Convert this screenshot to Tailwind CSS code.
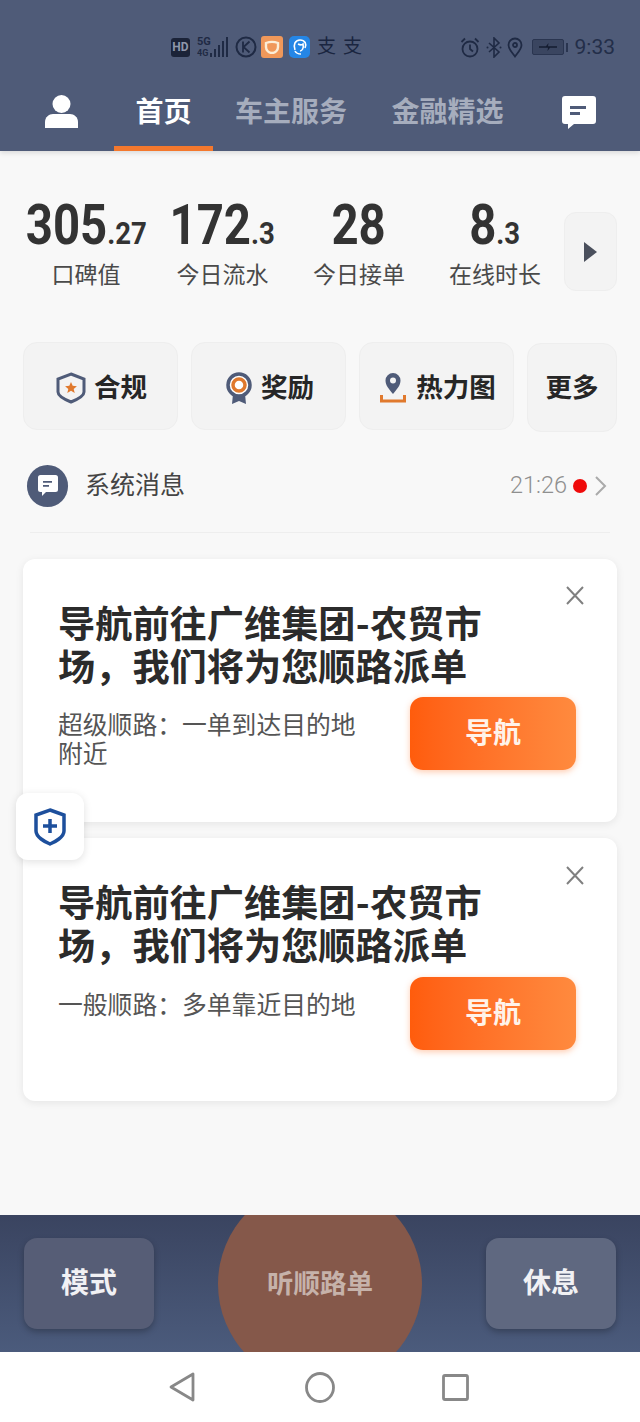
<!DOCTYPE html>
<html lang="zh"><head><meta charset="utf-8"><script src="https://cdn.jsdelivr.net/npm/@tailwindcss/browser@4"></script></head>
<body class="m-0">
<div class="relative w-[640px] h-[1422px] overflow-hidden flex flex-col bg-[#f8f8f8] font-['Roboto','Noto_Sans_CJK_SC',sans-serif] text-[#333]">

<header class="h-[151px] shrink-0 bg-[#4f5b78] flex flex-col relative z-10 shadow-[0_2px_5px_rgba(0,0,0,0.12)]">
  <div class="h-[35px]"></div>
  <div class="h-[24px] flex items-center pl-[171px] pr-[25px] text-[#1f2a44]">
    <span class="w-[19px] h-[19px] rounded-[3px] bg-[#1b2338] text-[#8f97ab] text-[12px] font-bold leading-[19px] text-center">HD</span>
    <svg class="ml-[7px]" width="32" height="22" viewBox="0 0 32 22" fill="#1f2a44"><text x="0" y="9" font-size="11" font-weight="700" font-family="Roboto">5G</text><text x="0" y="20" font-size="9" font-weight="700" font-family="Roboto">4G</text><rect x="13" y="17" width="2" height="4"/><rect x="17" y="13" width="2" height="8"/><rect x="21" y="9" width="2" height="12"/><rect x="25" y="5" width="2" height="16"/><rect x="29" y="1" width="2" height="20"/></svg>
    <svg class="ml-[6px]" width="22" height="22" viewBox="0 0 22 22" fill="none" stroke="#1f2a44" stroke-width="2"><circle cx="11" cy="11" r="9.500"/><path d="M8 5.500v11M14.500 5.500 8.500 11l6 5.500" stroke-width="1.800"/></svg>
    <span class="ml-[4px] w-[22px] h-[22px] rounded-[3px] bg-[#f0985a] flex items-center justify-center"><svg width="16" height="14" viewBox="0 0 16 14" fill="none" stroke="#fbeed8" stroke-width="2.400"><path d="M2 3c4-1.500 8-1.500 12 0v4a6 6 0 0 1-12 0z"/></svg></span>
    <span class="ml-[6px] w-[21px] h-[22px] rounded-[5px] bg-[#2586e6] flex items-center justify-center"><svg width="16" height="18" viewBox="0 0 16 18" fill="none" stroke="#fff" stroke-width="1.600"><path d="M3 12C1 7 3 2 8 2s7 4 5 8"/><path d="M6 6c2 1 4 1 5 0 1 4-1 7-3 7"/><path d="M3 13c1 2 3 3 6 3"/></svg></span>
    <span class="ml-[7px] text-[19px] leading-[22px] w-[19px] font-normal text-center text-[#1a2540]">支</span>
    <span class="ml-[7px] text-[19px] leading-[22px] w-[19px] font-normal text-center text-[#1a2540]">支</span>
    <div class="ml-auto flex items-center">
      <svg width="20" height="21" viewBox="0 0 20 21" fill="none" stroke="#1f2a44" stroke-width="1.800"><circle cx="10" cy="12" r="7.500"/><path d="M10 7.500V12l3 2.500M1.500 5 5 1.500M18.500 5 15 1.500"/></svg>
      <svg class="ml-[6px]" width="16" height="21" viewBox="0 0 16 21" fill="none" stroke="#1f2a44" stroke-width="1.600"><path d="M3 6l10 9-5 5V1l5 5L3 15"/><circle cx="1.500" cy="10.500" r="1" fill="#1f2a44" stroke="none"/><circle cx="14.500" cy="10.500" r="1" fill="#1f2a44" stroke="none"/></svg>
      <svg class="ml-[5px]" width="16" height="21" viewBox="0 0 16 21" fill="none" stroke="#1f2a44" stroke-width="1.800"><path d="M8 19.500C5 15.500 1.500 12 1.500 8a6.500 6.500 0 0 1 13 0c0 4-3.500 7.500-6.500 11.500z"/><circle cx="8" cy="8" r="2"/></svg>
      <span class="ml-[9px] w-[32px] h-[16px] rounded-[2px] border border-[#2a3550] bg-[#3a4560] flex items-center justify-center"><svg width="18" height="8" viewBox="0 0 18 8" fill="#141c30"><path d="M0 3.300h7L9.500 0 9 3.300h9v1.400h-7L8.500 8 9 4.700H0z"/></svg></span>
      <span class="ml-[2px] w-[2px] h-[9px] bg-[#2a3550]"></span>
      <span class="ml-[7px] text-[21px] leading-[22px] text-[#232e49]">9:33</span>
    </div>
  </div>
  <nav class="flex-1 flex items-stretch text-[28px] font-bold">
    <div class="w-[114px] flex items-center justify-center pl-[9px] pt-[12px]">
      <svg width="33" height="33" viewBox="0 0 33 33" fill="#fff"><circle cx="16.500" cy="9" r="9"/><path d="M0 33v-6c0-5 4-8 8-8h17c4 0 8 3 8 8v6z"/></svg>
    </div>
    <div class="w-[99px] h-full border-b-[5px] border-[#f4782d] text-white flex items-center justify-center pt-[20px]">首页</div>
    <div class="ml-[22px] w-[112px] text-[#a6adbd] flex items-center justify-center pt-[15px]">车主服务</div>
    <div class="ml-[44px] w-[113px] text-[#a6adbd] flex items-center justify-center pt-[15px]">金融精选</div>
    <div class="ml-[58px] flex items-center pt-[14px]">
      <svg width="34" height="33" viewBox="0 0 34 33" fill="#fff"><path d="M3 0h28a3 3 0 0 1 3 3v22a3 3 0 0 1-3 3H12l-6 5v-5H3a3 3 0 0 1-3-3V3a3 3 0 0 1 3-3z"/><path d="M8 10h16v3H8zM8 16h10v3H8z" fill="#4f5b78"/></svg>
    </div>
  </nav>
</header>

<main class="flex-1 flex flex-col px-[23px] min-h-0">
  <section class="mt-[43px] h-[98px] flex -mx-[5px] relative">
    <div class="w-[136px] flex flex-col items-center">
      <div class="h-[62px] leading-[62px] font-bold text-[55px] scale-x-[0.86] whitespace-nowrap">305<span class="text-[32px]">.27</span></div>
      <div class="text-[23px] leading-[28px] text-[#4a4a4a] mt-[6px]">口碑值</div>
    </div>
    <div class="w-[137px] flex flex-col items-center">
      <div class="h-[62px] leading-[62px] font-bold text-[55px] scale-x-[0.86] whitespace-nowrap">172<span class="text-[32px]">.3</span></div>
      <div class="text-[23px] leading-[28px] text-[#4a4a4a] mt-[6px]">今日流水</div>
    </div>
    <div class="w-[136px] flex flex-col items-center">
      <div class="h-[62px] leading-[62px] font-bold text-[55px] scale-x-[0.86] whitespace-nowrap">28</div>
      <div class="text-[23px] leading-[28px] text-[#4a4a4a] mt-[6px]">今日接单</div>
    </div>
    <div class="w-[136px] flex flex-col items-center">
      <div class="h-[62px] leading-[62px] font-bold text-[55px] scale-x-[0.86] whitespace-nowrap">8<span class="text-[32px]">.3</span></div>
      <div class="text-[23px] leading-[28px] text-[#4a4a4a] mt-[6px] whitespace-nowrap">在线时长</div>
    </div>
    <div class="ml-[1px] mt-[18px] w-[53px] h-[79px] rounded-[12px] bg-[#f3f3f3] border border-[#eeeeee] flex items-center justify-center">
      <svg width="13" height="20" viewBox="0 0 13 20" fill="#4a4f5c"><path d="M0 0l13 10L0 20z"/></svg>
    </div>
  </section>

  <section class="mt-[50px] flex gap-[13px] text-[26.5px] font-bold text-[#262626]">
    <div class="w-[155px] h-[88px] rounded-[14px] bg-[#f3f3f3] border border-[#eeeeee] flex items-center justify-center gap-[8px] pl-[2px] pt-[3px]">
      <svg width="30" height="32" viewBox="0 0 30 32"><path d="M15 2l13 5v13c0 4-8 8-13 10C10 28 2 24 2 20V7z" fill="none" stroke="#4f5b78" stroke-width="3"/><path d="M15 10l1.700 3.800 4.200.4-3.200 2.700 1 4.100-3.700-2.200-3.700 2.200 1-4.100-3.200-2.700 4.200-.4z" fill="#e0792d"/></svg>
      <span>合规</span>
    </div>
    <div class="w-[155px] h-[88px] rounded-[14px] bg-[#f3f3f3] border border-[#eeeeee] flex items-center justify-center gap-[9px] pl-[3px] pt-[3px]">
      <svg width="26" height="32" viewBox="0 0 26 32"><path d="M7 22l-1 10 7-3 7 3-1-10z" fill="#4f5b78"/><circle cx="13" cy="13" r="11" fill="#fff" stroke="#4f5b78" stroke-width="3.500"/><circle cx="13" cy="13" r="6" fill="none" stroke="#e0792d" stroke-width="3.500"/></svg>
      <span>奖励</span>
    </div>
    <div class="w-[155px] h-[88px] rounded-[14px] bg-[#f3f3f3] border border-[#eeeeee] flex items-center justify-center gap-[10px] pl-[3px] pt-[3px]">
      <svg width="26" height="31" viewBox="0 0 26 31"><path d="M13 22C9 17 5.500 13.500 5.500 8.500a7.500 7.500 0 0 1 15 0C20.500 13.500 17 17 13 22z" fill="#4f5b78"/><circle cx="13" cy="8.500" r="3" fill="#f3f3f3"/><path d="M1.500 23v6h23v-6" fill="none" stroke="#e0792d" stroke-width="3"/></svg>
      <span>热力图</span>
    </div>
    <div class="w-[90px] h-[89px] mt-[1px] rounded-[14px] bg-[#f3f3f3] border border-[#eeeeee] flex items-center justify-center pt-[1px]">更多</div>
  </section>

  <section class="mt-[32px] ml-[4px] h-[43px] flex items-center">
    <span class="w-[41px] h-[42px] rounded-full bg-[#4f5b78] flex items-center justify-center">
      <svg width="20" height="21" viewBox="0 0 20 21" fill="#fff"><path d="M2.500 0h15A2.500 2.500 0 0 1 20 2.500v12a2.500 2.500 0 0 1-2.500 2.500H8l-4 4v-4H2.500A2.500 2.500 0 0 1 0 14.500v-12A2.500 2.500 0 0 1 2.500 0z"/><path d="M5 6h9v1.800H5zM5 10h6v1.800H5z" fill="#4f5b78"/></svg>
    </span>
    <span class="ml-[17px] text-[25px] text-[#444] pt-[1px]">系统消息</span>
    <span class="ml-auto text-[23.5px] font-light text-[#8f8f8f]">21:26</span>
    <span class="ml-[6px] w-[14px] h-[14px] rounded-full bg-[#ef0a0a]"></span>
    <svg class="ml-[8px] mr-[10px]" width="12" height="20" viewBox="0 0 12 20" fill="none" stroke="#aaa" stroke-width="2"><path d="M1 1l9 9-9 9"/></svg>
  </section>
  <div class="mt-[25px] mx-[7px] h-px bg-[#eeeeee]"></div>

  <article class="mt-[26px] h-[263px] rounded-[12px] bg-white shadow-[0_2px_8px_rgba(0,0,0,0.08)] relative pl-[36px] pr-[41px] pt-[45px]">
    <svg class="absolute right-[33px] top-[27px]" width="18" height="19" viewBox="0 0 18 19" fill="none" stroke="#808080" stroke-width="2"><path d="M1 1l16 17M17 1L1 18"/></svg>
    <h2 class="w-[430px] -ml-[1px] text-[37.2px] leading-[43px] font-bold text-[#2b2b2b]">导航前往广维集团-农贸市场，我们将为您顺路派单</h2>
    <div class="flex mt-[7px] justify-between items-start">
      <p class="mt-[14px] -ml-[1px] w-[305px] text-[24.8px] leading-[29px] text-[#555]">超级顺路：一单到达目的地附近</p>
      <button class="w-[166px] h-[73px] rounded-[13px] bg-linear-to-r from-[#ff5c0c] to-[#ff8a3e] shadow-[0_2px_6px_rgba(255,110,30,0.35)] text-[28px] font-bold text-[#fff3ea] pt-[1px]">导航</button>
    </div>
  </article>

  <article class="mt-[16px] h-[263px] rounded-[12px] bg-white shadow-[0_2px_8px_rgba(0,0,0,0.08)] relative pl-[36px] pr-[41px] pt-[45px]">
    <svg class="absolute right-[33px] top-[28px]" width="18" height="19" viewBox="0 0 18 19" fill="none" stroke="#808080" stroke-width="2"><path d="M1 1l16 17M17 1L1 18"/></svg>
    <h2 class="w-[430px] -ml-[1px] text-[37.2px] leading-[43px] font-bold text-[#2b2b2b]">导航前往广维集团-农贸市场，我们将为您顺路派单</h2>
    <div class="flex mt-[8px] justify-between items-start">
      <p class="mt-[14px] -ml-[1px] w-[305px] text-[24.8px] leading-[29px] text-[#555]">一般顺路：多单靠近目的地</p>
      <button class="w-[166px] h-[73px] rounded-[13px] bg-linear-to-r from-[#ff5c0c] to-[#ff8a3e] shadow-[0_2px_6px_rgba(255,110,30,0.35)] text-[28px] font-bold text-[#fff3ea] pt-[1px]">导航</button>
    </div>
  </article>
</main>

<div class="absolute left-[16px] top-[793px] w-[68px] h-[67px] rounded-[12px] bg-white shadow-[0_2px_8px_rgba(0,0,0,0.12)] flex items-center justify-center z-10">
  <svg width="32" height="38" viewBox="0 0 32 38" fill="none" stroke="#1d4f9c" stroke-width="3.500"><path d="M16 2l14 5v16c0 6-9 11-14 13C11 34 2 29 2 23V7z"/><path d="M16 11v14M9 18h14"/></svg>
</div>

<footer class="h-[137px] shrink-0 relative overflow-hidden bg-linear-to-b from-[#3a4460] to-[#4b5b7c] flex items-center justify-between px-[24px]">
  <div class="w-[130px] h-[91px] rounded-[13px] bg-[#565d76] shadow-[0_3px_6px_rgba(0,0,0,0.25)] flex items-center justify-center text-[28px] font-bold text-[#f1f1f4]">模式</div>
  <div class="w-[204px] h-[204px] shrink-0 rounded-full bg-[#85584a] flex items-center justify-center text-[26.5px] font-bold text-[#c6b2aa]">听顺路单</div>
  <div class="w-[130px] h-[91px] rounded-[13px] bg-[#5f6880] shadow-[0_3px_6px_rgba(0,0,0,0.25)] flex items-center justify-center text-[28px] font-bold text-[#f1f1f4]">休息</div>
</footer>

<div class="h-[70px] shrink-0 bg-white flex items-center justify-center pr-[2px]">
  <svg width="26" height="30" viewBox="0 0 26 30" fill="none" stroke="#888" stroke-width="2.800" stroke-linejoin="round"><path d="M24 2v26L2 15z"/></svg>
  <svg class="ml-[110px]" width="30" height="31" viewBox="0 0 30 31" fill="none" stroke="#888" stroke-width="2.800"><ellipse cx="15" cy="15.500" rx="13.500" ry="14"/></svg>
  <svg class="ml-[107px]" width="27" height="27" viewBox="0 0 27 27" fill="none" stroke="#888" stroke-width="2.800"><rect x="1.500" y="1.500" width="24" height="24" rx="1.500"/></svg>
</div>
</div>
</body></html>
